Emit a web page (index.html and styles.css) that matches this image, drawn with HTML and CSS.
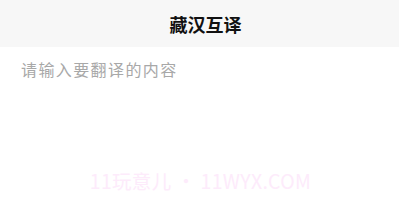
FILE: index.html
```html
<!DOCTYPE html>
<html lang="zh-CN">
<head>
    <meta charset="UTF-8">
    <meta name="viewport" content="width=device-width, initial-scale=1.0">
    <title>藏汉互译</title>
    <link rel="stylesheet" href="styles.css">
</head>
<body>
    <div class="header">
        <h1>藏汉互译</h1>
    </div>

    <div class="input-zone">
        <textarea class="source-text" placeholder="请输入要翻译的内容"></textarea>
    </div>

    <div class="watermark">11玩意儿 • 11WYX.COM</div>
</body>
</html>
```

FILE: styles.css
```css
body {
    font-family: "Noto Sans CJK SC", "Noto Sans", sans-serif;
    background: #ffffff;
    margin: 0;
    padding: 0;
    width: 399px;
    height: 206px;
    overflow: hidden;
}

.header {
    background: #f7f7f7;
    height: 47px;
    display: flex;
    justify-content: center;
    align-items: center;
}

.header h1 {
    margin: 0;
    margin-left: 12px;
    font-size: 18px;
    font-weight: bold;
    color: #111111;
}

.input-zone {
    padding: 10px 20px 0 21px;
}

.source-text {
    width: 100%;
    height: 100px;
    border: none;
    outline: none;
    resize: none;
    padding: 0;
    font-family: "Noto Sans CJK SC", sans-serif;
    font-size: 16px;
    letter-spacing: 1.4px;
    color: #333333;
    box-sizing: border-box;
}

.source-text::placeholder {
    color: #a8a8a8;
}

.watermark {
    text-align: center;
    margin-top: 4px;
    margin-left: 2px;
    font-size: 19.5px;
    letter-spacing: 0.3px;
    color: #fdebfb;
}
```
